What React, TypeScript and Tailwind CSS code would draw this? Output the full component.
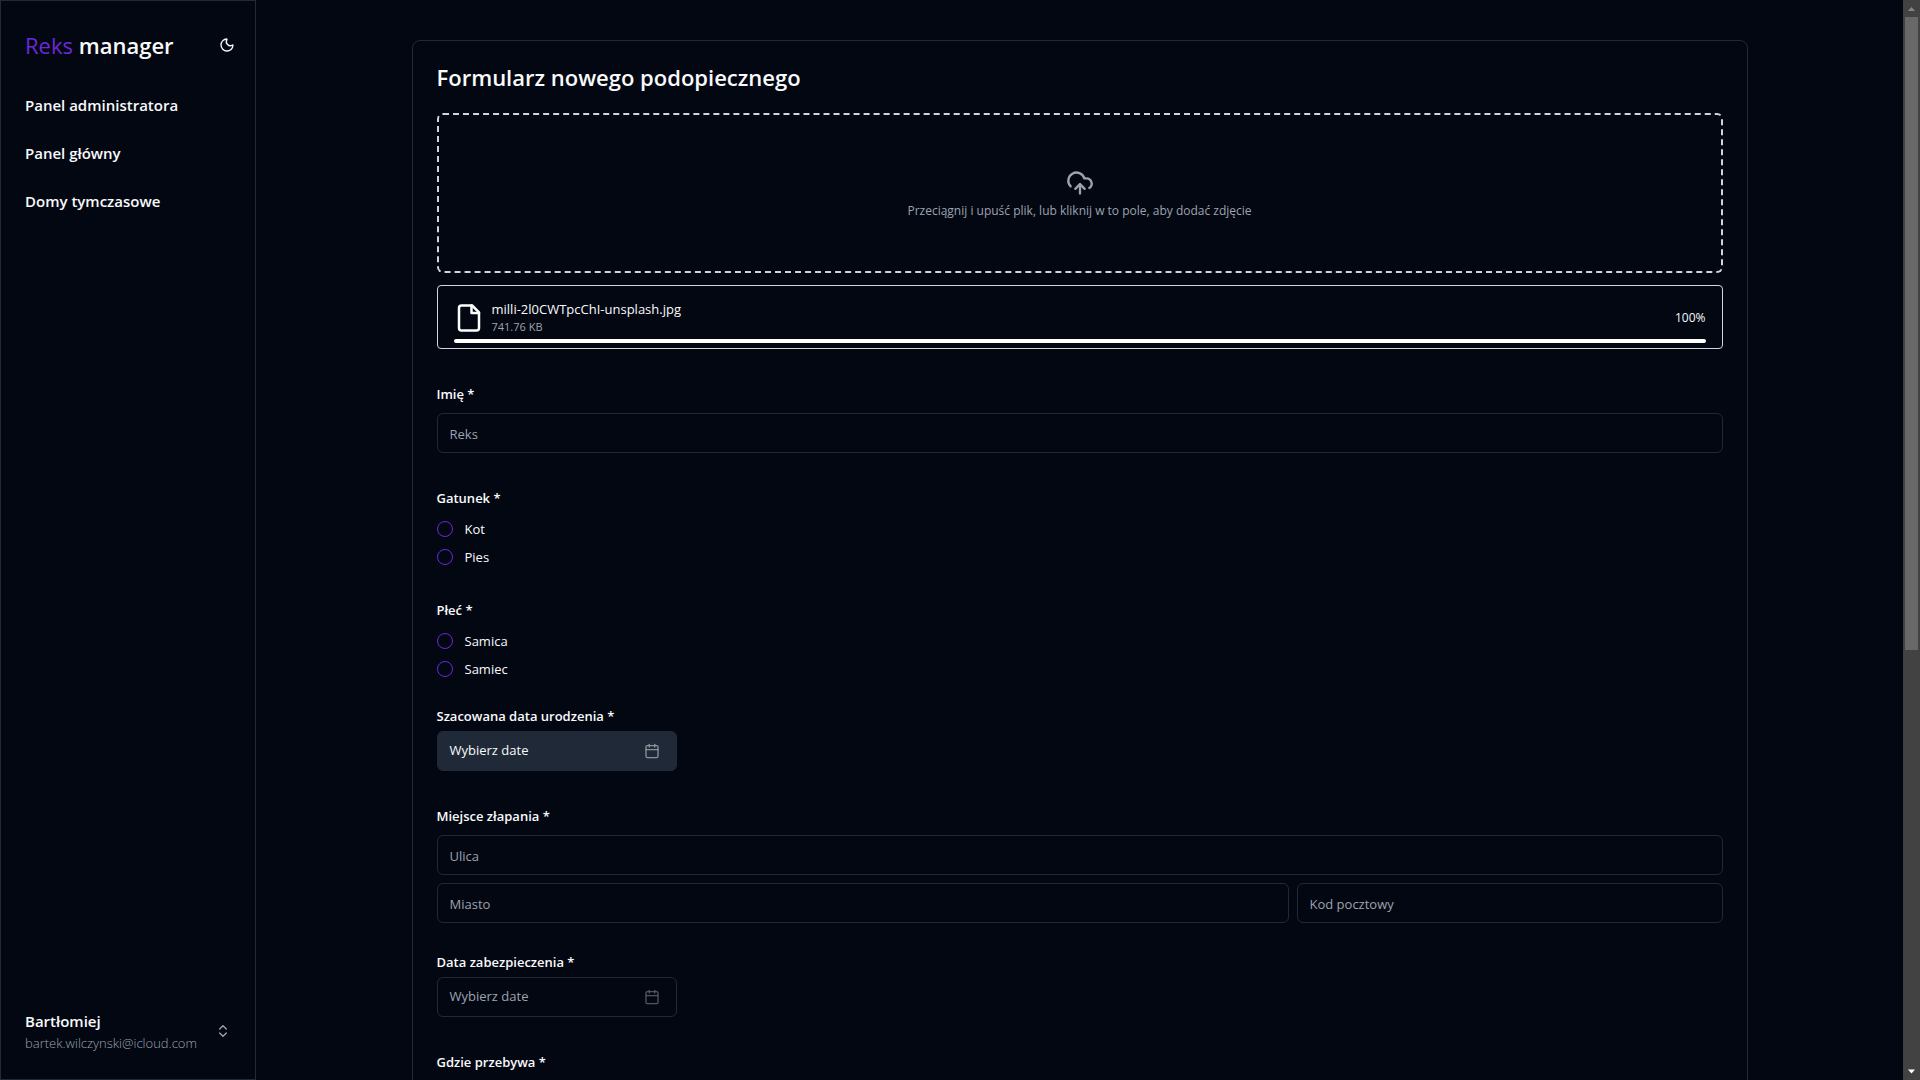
import type { ReactNode } from "react";
import { Calendar, ChevronsUpDown, CloudUpload, Moon } from "lucide-react";

const links = ["Panel administratora", "Panel główny", "Domy tymczasowe"];

function FileIcon() {
  return (
    <svg
      viewBox="0 0 24 24"
      className="size-[30px] text-white"
      fill="none"
      stroke="currentColor"
      strokeWidth="2"
      strokeLinecap="round"
      strokeLinejoin="round"
      aria-hidden="true"
    >
      <path d="M14.5 2H6a2 2 0 0 0-2 2v16a2 2 0 0 0 2 2h12a2 2 0 0 0 2-2V7.5L14.5 2z" />
      <path d="M14 2v6h6" />
    </svg>
  );
}

function Sidebar() {
  return (
    <aside className="flex w-64 shrink-0 flex-col border border-[#1f2937] px-6">
      <div className="flex items-start justify-between pt-7">
        <h1 className="text-[22px] leading-8 font-semibold">
          <span className="font-medium text-[#6d28d9]">Reks</span> manager
        </h1>
        <button type="button" aria-label="Zmień motyw" className="-mr-3 p-2">
          <Moon className="size-4" />
        </button>
      </div>
      <nav className="mt-5 flex flex-col">
        {links.map((label) => (
          <a key={label} href="#" className="flex h-12 items-center text-[15px] font-semibold">
            {label}
          </a>
        ))}
      </nav>
      <button type="button" className="mt-auto mb-[26px] flex items-center justify-between text-left">
        <span className="flex flex-col">
          <span className="text-[15px] leading-6 font-semibold">Bartłomiej</span>
          <span className="text-[13px] leading-5 font-light text-[#9ca3af]">bartek.wilczynski@icloud.com</span>
        </span>
        <ChevronsUpDown className="size-4 text-[#9ca3af]" />
      </button>
    </aside>
  );
}

function Label({ htmlFor, children }: { htmlFor: string; children: ReactNode }) {
  return (
    <label htmlFor={htmlFor} className="text-[13px] leading-[18px] font-semibold">
      {children}
    </label>
  );
}

function TextInput({ id, placeholder }: { id: string; placeholder: string }) {
  return (
    <input
      id={id}
      type="text"
      aria-label={placeholder}
      placeholder={placeholder}
      className="h-10 w-full min-w-0 rounded-md border border-[#1f2937] bg-transparent px-3 pt-0.5 text-[13px] placeholder:text-[#9ca3af]"
    />
  );
}

function RadioField({ name, legend, options }: { name: string; legend: string; options: string[] }) {
  return (
    <fieldset>
      <legend className="text-[13px] leading-[18px] font-semibold">{legend}</legend>
      <div className="mt-3.5 flex flex-col gap-3">
        {options.map((option) => (
          <label key={option} className="flex h-4 items-center gap-3 text-[13px] leading-4">
            <input
              type="radio"
              name={name}
              className="size-4 appearance-none rounded-full border border-[#6d28d9] checked:bg-[#6d28d9]"
            />
            {option}
          </label>
        ))}
      </div>
    </fieldset>
  );
}

function DateField({ id, label, active }: { id: string; label: string; active?: boolean }) {
  return (
    <div className="flex flex-col gap-1.5">
      <Label htmlFor={id}>{label}</Label>
      <button
        id={id}
        type="button"
        className={`flex h-10 w-60 items-center justify-between rounded-md border border-[#1f2937] pr-4 pl-3 text-[13px] ${
          active ? "bg-[#1f2937] text-[#f9fafb]" : "text-[#9ca3af]"
        }`}
      >
        Wybierz date
        <Calendar className="size-4 opacity-50" />
      </button>
    </div>
  );
}

function Upload() {
  return (
    <div className="flex flex-col gap-3">
      <button
        type="button"
        className="flex h-40 w-full flex-col items-center justify-center gap-1 rounded-md border-2 border-dashed border-[#d1d5db] pt-1 text-[#9ca3af]"
      >
        <CloudUpload className="size-7" />
        <span className="text-xs leading-5">Przeciągnij i upuść plik, lub kliknij w to pole, aby dodać zdjęcie</span>
      </button>
      <div className="flex h-16 flex-col rounded border border-[#d1d5db] px-4 pt-3.5">
        <div className="flex items-center">
          <FileIcon />
          <div className="ml-2 flex flex-col">
            <span className="text-[13px] leading-[18px]">milli-2l0CWTpcChI-unsplash.jpg</span>
            <span className="text-[11px] leading-[18px] text-[#9ca3af]">741.76 KB</span>
          </div>
          <span className="ml-auto text-xs">100%</span>
        </div>
        <div role="progressbar" aria-label="Postęp" aria-valuenow={100} className="mt-[3px] h-1 rounded-full bg-white" />
      </div>
    </div>
  );
}

function Scrollbar() {
  return (
    <div aria-hidden="true" className="flex w-[17px] shrink-0 flex-col items-center justify-between bg-[#424242]">
      <svg viewBox="0 0 17 17" className="size-[17px]">
        <path d="M5 11 8.5 7 12 11Z" fill="#868686" />
      </svg>
      <div className="flex w-full grow justify-center">
        <div className="h-[60.5%] w-[13px] bg-[#686868]" />
      </div>
      <svg viewBox="0 0 17 17" className="size-[17px]">
        <path d="M5 6.5 8.5 10.5 12 6.5Z" fill="#ffffff" />
      </svg>
    </div>
  );
}

export default function App() {
  return (
    <div className="flex h-screen overflow-hidden bg-[#030712] font-['Open_Sans','Noto_Sans',sans-serif] text-[#f9fafb]">
      <Sidebar />
      <main className="min-w-0 grow">
        <div className="mx-auto max-w-[1400px] px-8 pt-10">
          <form className="rounded-lg border border-[#1f2937] px-6 pt-5 pb-6">
            <h2 className="mb-5 text-[22px] leading-8 font-semibold">Formularz nowego podopiecznego</h2>
            <Upload />
            <div className="mt-9 flex flex-col gap-9">
              <div className="flex flex-col gap-2.5">
                <Label htmlFor="name">Imię *</Label>
                <TextInput id="name" placeholder="Reks" />
              </div>
              <RadioField name="species" legend="Gatunek *" options={["Kot", "Pies"]} />
              <div className="flex flex-col gap-[30px]">
                <RadioField name="sex" legend="Płeć *" options={["Samica", "Samiec"]} />
                <DateField id="birth" label="Szacowana data urodzenia *" active />
              </div>
              <div className="flex flex-col gap-[30px]">
                <div className="flex flex-col">
                  <Label htmlFor="street">Miejsce złapania *</Label>
                  <div className="mt-2.5 flex flex-col gap-2">
                    <TextInput id="street" placeholder="Ulica" />
                    <div className="grid grid-cols-[2fr_1fr] gap-2">
                      <TextInput id="city" placeholder="Miasto" />
                      <TextInput id="zip" placeholder="Kod pocztowy" />
                    </div>
                  </div>
                </div>
                <DateField id="secured" label="Data zabezpieczenia *" />
              </div>
              <div className="flex flex-col gap-2.5">
                <Label htmlFor="location">Gdzie przebywa *</Label>
                <TextInput id="location" placeholder="Schronisko" />
              </div>
            </div>
          </form>
        </div>
      </main>
      <Scrollbar />
    </div>
  );
}
